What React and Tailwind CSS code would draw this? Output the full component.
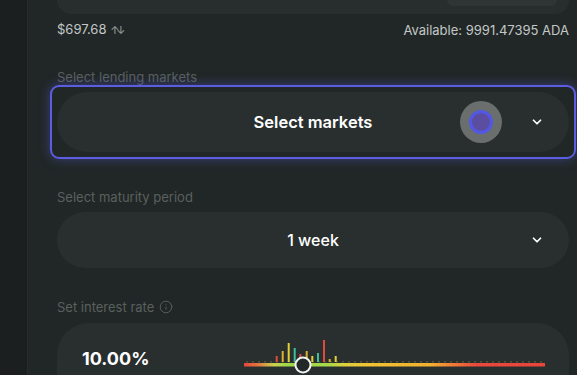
import React from 'react';
import { ChevronDown, Info } from 'lucide-react';

const bars = [
  { x: 38.7, top: 19, color: '#e0493b' },
  { x: 44.7, top: 14, color: '#dcb02e' },
  { x: 50.7, top: 6, color: '#e2d034' },
  { x: 56.7, top: 11, color: '#3dbf9c' },
  { x: 62.3, top: 17, color: '#e0493b' },
  { x: 68.7, top: 14, color: '#dcb02e' },
  { x: 74.3, top: 19, color: '#e2d034' },
  { x: 80, top: 16, color: '#3dbf9c' },
  { x: 86, top: 3, color: '#e0493b' },
  { x: 91.7, top: 22, color: '#dcb02e' },
  { x: 97.7, top: 19, color: '#e2d034' },
];

const RateChart = () => {
  const ticks = [];
  for (let x = 8; x < 306; x += 6) ticks.push(x);
  return (
    <svg width="310" height="37" viewBox="0 0 310 37">
      <defs>
        <linearGradient id="track" x1="0" x2="1" y1="0" y2="0">
          <stop offset="0" stopColor="#e8453c" />
          <stop offset="0.05" stopColor="#e07a40" />
          <stop offset="0.1" stopColor="#c8d24e" />
          <stop offset="0.15" stopColor="#9ad848" />
          <stop offset="0.28" stopColor="#a8d848" />
          <stop offset="0.33" stopColor="#dcd03e" />
          <stop offset="0.42" stopColor="#f0c232" />
          <stop offset="0.62" stopColor="#f0b030" />
          <stop offset="0.7" stopColor="#f07838" />
          <stop offset="0.77" stopColor="#e84a3c" />
          <stop offset="1" stopColor="#e8453c" />
        </linearGradient>
      </defs>
      {ticks.map((x) => (
        <rect key={x} x={x} y="24" width="2" height="1.5" fill="#8a7a3a" opacity="0.45" />
      ))}
      {bars.map((b, i) => (
        <rect key={i} x={b.x - 1} y={b.top} width="2" height={25 - b.top} fill={b.color} />
      ))}
      <rect x="6" y="26" width="301" height="3.5" fill="url(#track)" />
      <circle cx="65" cy="28" r="7.5" fill="#222727" stroke="#f2f2f2" strokeWidth="2" />
    </svg>
  );
};

const App = () => {
  return (
    <div
      className="w-[577px] h-[375px] overflow-hidden flex bg-[#212726] text-white"
      style={{ fontFamily: 'Inter, "Noto Sans", sans-serif' }}
    >
      {/* left rail */}
      <div className="w-[28px] shrink-0 bg-[#1b1f1f] border-r border-[#262c2b]" />

      <div className="flex-1 pl-[29px] pr-[8px] flex flex-col">
        {/* end of the amount card above */}
        <div className="h-[14px] shrink-0 bg-[#272e2d] rounded-b-[24px] flex justify-end pr-[12px]">
          <div className="w-[110px] h-[6px] bg-[#2e3534] rounded-b-[14px]" />
        </div>

        <div className="mt-[7px] shrink-0 flex justify-between items-center text-[13px] leading-4 text-[#c3c8c7]">
          <span>
            $697.68 <span className="text-[11px] tracking-[-3px] text-[#9aa09f]">↑↓</span>
          </span>
          <span>Available: 9991.47395 ADA</span>
        </div>

        {/* lending markets */}
        <div className="mt-[31px] shrink-0 text-[13px] leading-4 text-[#5a605f]">Select lending markets</div>
        <div className="-mx-[7px] shrink-0 border-2 border-[#5b5de2] rounded-[9px] p-[5px] shadow-[0_0_12px_rgba(92,94,230,0.45)]">
          <div className="relative h-[60px] rounded-full bg-[#282f2e] flex items-center justify-center">
            <span className="text-[16.5px] font-semibold">Select markets</span>
            <div className="absolute left-[403px] top-[9px] w-[42px] h-[42px] rounded-full bg-[#6a6e6d] flex items-center justify-center">
              <div className="w-[24px] h-[24px] rounded-full bg-[#5b4ea0] border-[3px] border-[#5357e6]" />
            </div>
            <ChevronDown className="absolute right-[25px]" size={14} strokeWidth={3} />
          </div>
        </div>

        {/* maturity */}
        <div className="mt-[30px] shrink-0 text-[13px] leading-4 text-[#5a605f]">Select maturity period</div>
        <div className="mt-[7px] shrink-0 relative h-[56px] rounded-full bg-[#282f2e] flex items-center justify-center">
          <span className="text-[16px] font-medium">1 week</span>
          <ChevronDown className="absolute right-[25px]" size={14} strokeWidth={3} />
        </div>

        {/* interest rate */}
        <div className="mt-[31px] shrink-0 flex items-center gap-[5px] text-[13px] leading-4 text-[#5a605f]">
          <span>Set interest rate</span>
          <Info size={14} strokeWidth={1.6} />
        </div>
        <div className="mt-[8px] h-[100px] shrink-0 rounded-[32px] bg-[#282f2e] pl-[25px] pt-[14px] grid grid-cols-[156px_310px]">
          <span className="text-[18px] font-bold leading-[22px] mt-[11px]">10.00%</span>
          <RateChart />
        </div>
      </div>
    </div>
  );
};

export default App;
